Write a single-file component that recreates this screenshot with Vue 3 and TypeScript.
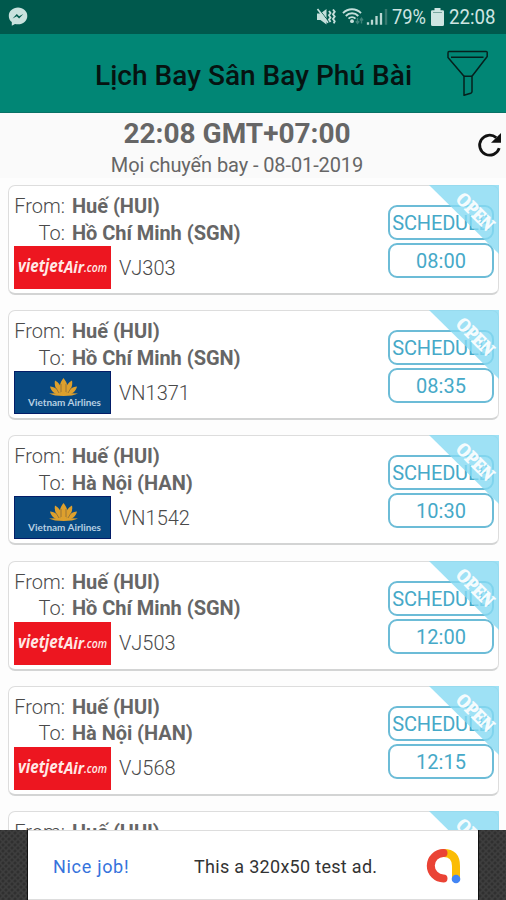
<script setup lang="ts">
interface Flight {
  to: string
  code: string
  airline: 'vietjet' | 'vietnam'
  time: string
}

const flights: Flight[] = [
  { to: 'Hồ Chí Minh (SGN)', code: 'VJ303', airline: 'vietjet', time: '08:00' },
  { to: 'Hồ Chí Minh (SGN)', code: 'VN1371', airline: 'vietnam', time: '08:35' },
  { to: 'Hà Nội (HAN)', code: 'VN1542', airline: 'vietnam', time: '10:30' },
  { to: 'Hồ Chí Minh (SGN)', code: 'VJ503', airline: 'vietjet', time: '12:00' },
  { to: 'Hà Nội (HAN)', code: 'VJ568', airline: 'vietjet', time: '12:15' },
]
</script>

<template>
  <div class="screen">
    <header class="status">
      <svg class="messenger" width="20" height="20" viewBox="0 0 20 20">
        <path d="M10 .6C4.8.6.8 4.2.8 8.9c0 2.6 1.1 4.7 3 6.2v3.6l3.2-1.8c1 .3 2 .4 3 .4 5.200 0 9.300-3.800 9.300-8.400S15.200.6 10 .6z" fill="#c9e2de" />
        <path d="M4.600 11.400l4.200-4.300 2.300 2.200 4.200-2.200-4.200 4.300-2.300-2.200z" fill="#00594d" />
      </svg>
      <div class="status-right">
        <svg width="74" height="20" viewBox="0 0 74 20" fill="none">
          <path d="M1 6.500h3.500L10.500 2v15.500L4.500 13H1z" fill="#c4dfdb" />
          <path d="M2.500 1.500L13 15" stroke="#00594d" stroke-width="1" />
          <path d="M1.500 2L12 15.800" stroke="#c4dfdb" stroke-width="1.700" />
          <path d="M13 4l1.500 2-1.500 2.300 1.500 2.300-1.500 2 1.500 2.400M17 2.500l1.700 2.300L17 7.200l1.700 2.400L17 12l1.700 2.300-1 2" stroke="#c4dfdb" stroke-width="1.900" />
          <path d="M27 6.200c5-5.200 13-5.200 18 0M29.800 9c3.500-3.600 9-3.600 12.500 0M32.500 11.700c2-2 5-2 7 0" stroke="#c4dfdb" stroke-width="1.900" />
          <circle cx="36" cy="14.200" r="1.900" fill="#c4dfdb" />
          <path d="M41.500 11v5M39.800 14.200l1.700 2.200 1.700-2.200M45.500 16.500v-5M43.900 13.300l1.600-2.100 1.600 2.100" stroke="#3f8379" stroke-width="1.400" />
          <path d="M52 17.800v-2.500M56 17.800v-5M60.500 17.800V9M65 17.800V6" stroke="#b9d7d2" stroke-width="2.300" />
          <path d="M70 17.800V2" stroke="#37796f" stroke-width="2.400" />
        </svg>
        <svg class="battery-text" width="35" height="26" viewBox="0 0 35 26">
          <text x="0" y="20" font-size="21" textLength="34" lengthAdjust="spacingAndGlyphs">79%</text>
        </svg>
        <svg class="battery" width="13" height="18" viewBox="0 0 13 18">
          <path d="M3.500 0h6v2.200h2.200q1.300 0 1.300 1.300v13q0 1.500-1.500 1.500h-10Q0 18 0 16.500v-13Q0 2.200 1.300 2.200h2.200z" fill="#cfe5e2" />
          <path d="M2 4.500h9" stroke="#78a69f" stroke-width="1" />
        </svg>
        <svg class="clock" width="47" height="26" viewBox="0 0 47 26">
          <text x="0" y="20" font-size="21" textLength="46.500" lengthAdjust="spacingAndGlyphs">22:08</text>
        </svg>
      </div>
    </header>

    <div class="toolbar">
      <h1 class="title">Lịch Bay Sân Bay Phú Bài</h1>
      <svg class="filter" width="42" height="48" viewBox="0 0 42 48" fill="none" stroke="#06201d" stroke-width="1.500" stroke-linejoin="round">
        <path d="M2 1.500h37q1.500 0 1.200 1.500v3.500L25 26.300v15.200q0 1.200-1.300 1.800l-6.700 2V26.300L1 7.500V3q0-1.500 1-1.500z" />
        <path d="M4 7.200h32.500M17 26.300h8" />
      </svg>
    </div>

    <section class="summary">
      <div class="summary-text">
        <div class="now">22:08 GMT+07:00</div>
        <div class="date">Mọi chuyến bay - 08-01-2019</div>
      </div>
      <svg class="refresh" width="26" height="26" viewBox="0 0 26 26">
        <path d="M23.200 16.200A10 10 0 1 1 20.200 5.600" fill="none" stroke="#111" stroke-width="2.800" />
        <path d="M25 1v9.800H15z" fill="#111" />
      </svg>
    </section>

    <main class="list">
      <article v-for="flight in flights" :key="flight.code" class="card">
        <div class="route">
          <span class="label">From:</span><b class="place">Huế (HUI)</b>
          <span class="label">To:</span><b class="place">{{ flight.to }}</b>
        </div>
        <div class="carrier">
          <svg v-if="flight.airline === 'vietjet'" width="97" height="43" viewBox="0 0 97 43">
            <rect width="97" height="43" fill="#ed1620" />
            <g fill="#ffe9e6" font-family="'Open Sans', sans-serif" font-style="italic">
              <text x="4" y="26" font-size="17" font-weight="700" textLength="46" lengthAdjust="spacingAndGlyphs">vietjet</text>
              <text x="50" y="27" font-size="16" font-weight="700" textLength="20" lengthAdjust="spacingAndGlyphs">Air</text>
              <text x="70" y="26" font-size="12" font-weight="600" textLength="23" lengthAdjust="spacingAndGlyphs">.com</text>
            </g>
          </svg>
          <svg v-else width="97" height="43" viewBox="0 0 97 43">
            <rect x=".5" y=".5" width="96" height="42" fill="#074881" stroke="#031d68" />
            <g fill="#dda02d">
              <path d="M49.500 7c-4 5-5 10-2.500 16h5c3-6 1.500-11-2.500-16z" />
              <path d="M41 9.500c-1 5 1 10 5.500 13.500l1-5c-1-4-3-6.500-6.500-8.500zM58 9.500c1 5-1 10-5.500 13.500l-1-5c1-4 3-6.500 6.500-8.500z" />
              <path d="M36 15.500c1 5 5 8 11 8.500-2-5-6-8-11-8.500zM63 15.500c-1 5-5 8-11 8.500 2-5 6-8 11-8.500z" />
              <path d="M35 22.500q14.500-1 29 0-5 2.500-14.500 2.500T35 22.500z" />
            </g>
            <path d="M47 13v8M52 13v8M42 17l3 5M57 17l-3 5" stroke="#886b3b" stroke-width=".8" />
            <text x="14" y="35" fill="#b6cfe2" font-family="Lato, sans-serif" font-weight="700" font-size="9.500" textLength="73" lengthAdjust="spacingAndGlyphs">Vietnam Airlines</text>
          </svg>
          <span class="code">{{ flight.code }}</span>
        </div>
        <div class="badges">
          <span class="pill schedule">SCHEDULE</span>
          <span class="pill">{{ flight.time }}</span>
        </div>
        <svg class="ribbon" width="70" height="70" viewBox="0 0 70 70">
          <path d="M0 0h70v69z" fill="#86daf3" fill-opacity=".8" />
          <text transform="translate(26 15) rotate(45)" fill="#fff" fill-opacity=".88" font-family="'Liberation Serif', serif" font-weight="700" font-size="19" stroke="#fff" stroke-opacity=".8" stroke-width="1.100" textLength="45" lengthAdjust="spacingAndGlyphs">OPEN</text>
        </svg>
      </article>
      <article class="card">
        <div class="route">
          <span class="label">From:</span><b class="place">Huế (HUI)</b>
        </div>
        <svg class="ribbon" width="70" height="70" viewBox="0 0 70 70">
          <path d="M0 0h70v69z" fill="#86daf3" fill-opacity=".8" />
          <text transform="translate(26 15) rotate(45)" fill="#fff" fill-opacity=".88" font-family="'Liberation Serif', serif" font-weight="700" font-size="19" stroke="#fff" stroke-opacity=".8" stroke-width="1.100" textLength="45" lengthAdjust="spacingAndGlyphs">OPEN</text>
        </svg>
      </article>
    </main>

    <footer class="ad">
      <div class="ad-body">
        <span class="nice">Nice job!</span>
        <span class="message">This a 320x50 test ad.</span>
        <svg class="admob" width="36" height="36" viewBox="0 0 36 36" fill="none" stroke-width="8" stroke-linecap="round">
          <path d="M18.500 5q12.500 0 12.500 13v12" stroke="#fbbc04" />
          <path d="M18.500 5a12.700 12.700 0 1 0 0 25.400" stroke="#ea4335" />
          <circle cx="31" cy="31" r="4.300" fill="#4285f4" />
        </svg>
      </div>
    </footer>
  </div>
</template>

<style>
body {
  margin: 0;
}
</style>

<style scoped>
.screen {
  width: 506px;
  height: 900px;
  display: flex;
  flex-direction: column;
  overflow: hidden;
  background: #fdfdfd;
  color: #666;
  font-family: Roboto, sans-serif;
}
.status {
  height: 34px;
  flex: none;
  box-sizing: border-box;
  display: flex;
  align-items: center;
  justify-content: space-between;
  padding: 0 10px 0 8px;
  background: #00594d;
}
.status-right {
  display: flex;
  align-items: center;
}
.battery-text,
.clock {
  fill: #cfe5e2;
}
.battery-text {
  margin-left: 2px;
}
.battery {
  margin: 0 5px 0 4px;
}
.toolbar {
  height: 79px;
  flex: none;
  box-sizing: border-box;
  display: flex;
  align-items: center;
  justify-content: space-between;
  padding: 2px 17px 0 95px;
  border-bottom: 1px solid #087266;
  background: #018675;
}
.title {
  margin: 2px 0 0;
  color: #061311;
  font-size: 28px;
  font-weight: 500;
  letter-spacing: 0.03px;
  white-space: nowrap;
}
.summary {
  height: 65px;
  flex: none;
  display: flex;
  justify-content: space-between;
  background: #fafafa;
}
.summary-text {
  width: 474px;
  text-align: center;
}
.now {
  margin-top: 4px;
  font-size: 28px;
  line-height: 34px;
  font-weight: 700;
}
.date {
  font-size: 20px;
  line-height: 28px;
  letter-spacing: -0.1px;
}
.refresh {
  margin: 19px 4px 0 0;
}
.list {
  flex: 1;
  min-height: 0;
  overflow: hidden;
  display: flex;
  flex-direction: column;
  gap: 15.200px;
  padding: 7px 7px 0 8px;
}
.card {
  position: relative;
  flex: none;
  box-sizing: border-box;
  height: 110px;
  display: grid;
  grid-template-columns: 1fr 106px;
  grid-template-rows: 53px 43px;
  padding: 7px 4px 0 5px;
  border: 1px solid #ddd;
  border-bottom: 2px solid #d3d4d4;
  border-radius: 7px;
  background: #fff;
}
.route {
  display: grid;
  grid-template-columns: 51px 1fr;
  grid-auto-rows: 26.500px;
  column-gap: 7px;
  font-size: 20px;
  line-height: 27px;
  white-space: nowrap;
}
.label {
  text-align: right;
  font-weight: 300;
  color: #4a4a4a;
}
.place {
  font-weight: 700;
  letter-spacing: -0.05px;
}
.carrier {
  grid-row: 2;
  display: flex;
  align-items: center;
  gap: 8px;
}
.code {
  font-size: 20px;
  font-weight: 300;
  color: #4a4a4a;
}
.badges {
  grid-column: 2;
  grid-row: 1 / 3;
  display: flex;
  flex-direction: column;
  gap: 3px;
  padding-top: 12px;
}
.pill {
  height: 35px;
  box-sizing: border-box;
  border: 2px solid #6cbcd7;
  border-radius: 9px;
  color: #46a9c8;
  font-size: 20px;
  line-height: 33px;
  text-align: center;
  white-space: nowrap;
}
.schedule {
  letter-spacing: -0.15px;
}
.ribbon {
  position: absolute;
  top: -1px;
  right: -1px;
}
.ad {
  height: 70px;
  flex: none;
  display: flex;
  justify-content: center;
  background-color: #3e3e3e;
  background-image: radial-gradient(circle, #303030 1.200px, transparent 1.800px), radial-gradient(circle, #303030 1.200px, transparent 1.800px);
  background-position: 0 0, 3px 3px;
  background-size: 6px 6px;
}
.ad-body {
  width: 450px;
  box-sizing: border-box;
  display: flex;
  align-items: center;
  padding: 2px 17px 0 25px;
  border-top: 1px solid #ddd;
  border-bottom: 1px solid #ddd;
  box-shadow: 0 0 0 1px #111;
  background: #fff;
  font-size: 18px;
}
.nice {
  width: 141px;
  color: #3573dc;
  letter-spacing: 0.7px;
}
.message {
  flex: 1;
  color: #333;
  letter-spacing: 0.3px;
}
</style>
